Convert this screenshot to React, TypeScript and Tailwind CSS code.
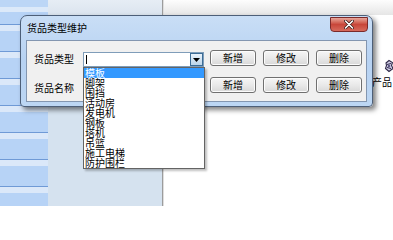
import React from "react";

const items = ["模板", "脚架", "围挡", "活动房", "发电机", "钢板", "塔机", "吊篮", "施工电梯", "防护围栏"];

const WinButton = ({ label }: { label: string }) => (
    <div className="w-[46px] h-[16px] flex items-center justify-center rounded-[3px] border border-[#707070] bg-gradient-to-b from-[#f6f6f6] via-[#e9e9e9] to-[#d8d8d8] text-[10px] leading-none text-black shadow-[inset_0_0_0_1px_#fcfcfc]">
        {label}
    </div>
);

const ListRows = () => (
    <div className="flex flex-col">
        <div className="h-[7px] bg-[#bcd6f6]" />
        <div className="h-[5px] bg-[#dce9f9]" />
        <div className="h-[12px] bg-[#b7d3f6]" />
        {Array.from({ length: 7 }).map((_, i) => (
            <div key={i} className="flex flex-col">
                <div className="h-[1px] bg-[#6f9ad6]" />
                <div className="h-[6px] bg-[#dbe8f9]" />
                <div className="h-[20px] bg-[#b7d3f6]" />
            </div>
        ))}
    </div>
);

const App: React.FC = () => {
    return (
        <div className="relative w-[393px] h-[206px] overflow-hidden bg-white font-['Noto_Sans_CJK_SC','Noto_Sans',sans-serif]">
            {/* desktop behind */}
            <div className="flex h-full">
                <div className="w-[48px] h-full overflow-hidden">
                    <ListRows />
                </div>
                <div className="w-[114px] h-full flex flex-col">
                    <div className="h-[15px] bg-gradient-to-b from-[#e6edf5] to-[#dbe4ee]" />
                    <div className="flex-1 bg-[#d5e2ef]" />
                </div>
                <div className="w-[1px] h-full bg-[#9c9c9c]" />
                <div className="w-[1px] h-full bg-[#dedede]" />
                <div className="flex-1 h-full flex flex-col">
                    <div className="h-[15px] bg-gradient-to-b from-[#fdfdfd] to-[#e6e6e6]" />
                    <div className="flex-1 bg-white" />
                </div>
            </div>

            {/* desktop icon on the right */}
            <div className="absolute left-[372px] top-[59px] w-[30px] flex flex-col items-start">
                <svg className="ml-[12px]" viewBox="0 0 10 14" width="10" height="14">
                    <path d="M2 4 L5 1.5 L8.5 3.5 L7.5 6.5 L9 9.5 L5 12.5 L1.5 9.5 L2.5 6.5 Z" fill="#d3d0ea" stroke="#2f2a48" strokeWidth="1.1" />
                    <path d="M3 5.5 L7 4.5 M3 8.5 L7 9.5" stroke="#2f2a48" strokeWidth="1" />
                    <circle cx="5" cy="7" r="1.3" fill="#5d5785" />
                </svg>
                <div className="mt-[4px] text-[10px] leading-none text-black whitespace-nowrap">产品</div>
            </div>

            {/* dialog window */}
            <div className="absolute left-[20px] top-[15px] w-[353px] h-[92px] rounded-t-[7px] rounded-b-[4px] border border-[#4d5f78] bg-gradient-to-b from-[#c9def6] via-[#b7d2f2] to-[#bcd6f3] shadow-[3px_3px_5px_rgba(0,0,0,0.5)] flex flex-col">
                <div className="h-[24px] flex items-start justify-between pl-[6px] pr-[4px]">
                    <div className="mt-[5px] text-[10px] leading-[14px] text-black">货品类型维护</div>
                    <div className="mt-[1px] w-[38px] h-[15px] rounded-b-[4px] border border-[#7a2a2a] bg-gradient-to-b from-[#e7a69b] via-[#c8463a] to-[#d66a5c] flex items-center justify-center">
                        <svg viewBox="0 0 10 9" width="10" height="9">
                            <path d="M1.5 1 L8.5 8 M8.5 1 L1.5 8" stroke="#3b1a18" strokeWidth="3" strokeLinecap="round" />
                            <path d="M1.5 1 L8.5 8 M8.5 1 L1.5 8" stroke="#ffffff" strokeWidth="1.6" strokeLinecap="round" />
                        </svg>
                    </div>
                </div>
                <div className="mx-[5px] h-[62px] border border-[#8396b0] bg-[#f0f0f0] pt-[9px] pl-[7px] flex flex-col">
                    <div className="flex items-start h-[17px]">
                        <div className="w-[49px] mt-[3px] text-[10px] leading-[12px] text-black">货品类型</div>
                        <div className="w-[121px] h-[15px] mt-[2px] border border-[#7f9db9] bg-white flex items-center">
                            <div className="ml-[2px] w-[1px] h-[9px] bg-black" />
                            <div className="flex-1" />
                            <div className="w-[13px] h-full border border-[#3c6c96] bg-gradient-to-b from-[#e8f2fb] to-[#bcd5ea] flex items-center justify-center">
                                <svg viewBox="0 0 7 4" width="7" height="4">
                                    <path d="M0 0 L7 0 L3.5 4 Z" fill="#000" />
                                </svg>
                            </div>
                        </div>
                        <div className="ml-[6px] flex gap-[7px]">
                            <WinButton label="新增" />
                            <WinButton label="修改" />
                            <WinButton label="删除" />
                        </div>
                    </div>
                    <div className="flex items-start h-[17px] mt-[10px]">
                        <div className="w-[49px] mt-[5px] text-[10px] leading-[12px] text-black">货品名称</div>
                        <div className="w-[121px] h-[15px] mt-[3px] border border-[#7f9db9] bg-white" />
                        <div className="ml-[6px] flex gap-[7px]">
                            <WinButton label="新增" />
                            <WinButton label="修改" />
                            <WinButton label="删除" />
                        </div>
                    </div>
                </div>
            </div>

            {/* dropdown list */}
            <div className="absolute left-[83px] top-[67px] w-[122px] border border-[#646464] bg-white shadow-[2px_2px_2px_rgba(0,0,0,0.25)]">
                {items.map((it, i) => (
                    <div
                        key={it}
                        className={
                            i === 0
                                ? "h-[10px] leading-[10px] pl-[1px] text-[10px] bg-[#3399ff] text-white whitespace-nowrap"
                                : "h-[10px] leading-[10px] pl-[1px] text-[10px] text-black whitespace-nowrap"
                        }
                    >
                        {it}
                    </div>
                ))}
            </div>
        </div>
    );
};

export default App;
